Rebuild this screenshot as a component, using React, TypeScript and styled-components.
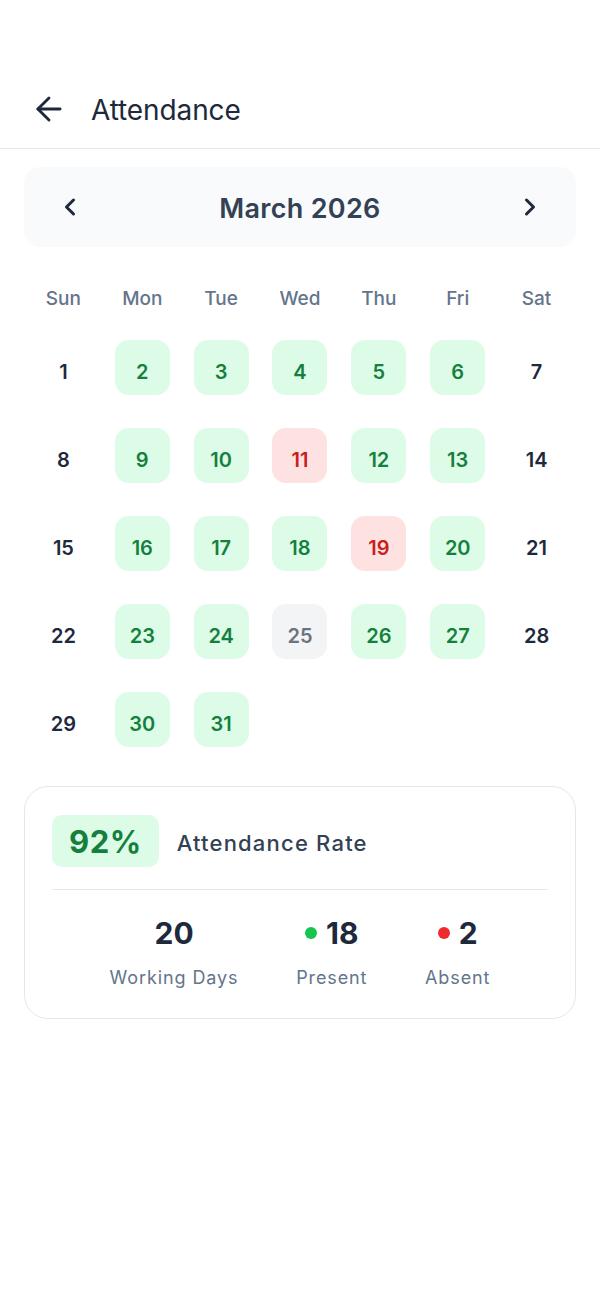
import { createGlobalStyle } from "styled-components";
import styled from "styled-components";
import { ArrowLeft, ChevronLeft, ChevronRight } from "lucide-react";

type DayStatus = "present" | "absent" | "holiday" | "none";

const WEEKDAYS = ["Sun", "Mon", "Tue", "Wed", "Thu", "Fri", "Sat"];

// March 2026 starts on a Sunday
const ABSENT = [11, 19];
const HOLIDAY = [25];

function statusOf(day: number): DayStatus {
  const dow = (day - 1) % 7;
  if (dow === 0 || dow === 6) return "none";
  if (ABSENT.includes(day)) return "absent";
  if (HOLIDAY.includes(day)) return "holiday";
  return "present";
}

const days = Array.from({ length: 31 }, (_, i) => i + 1);

export default function App() {
  return (
    <>
      <GlobalStyle />
      <Page>
        <Header>
          <BackButton aria-label="Back">
            <ArrowLeft size={38} strokeWidth={1.8} />
          </BackButton>
          <Title>Attendance</Title>
        </Header>

        <Content>
          <MonthNav>
            <NavButton aria-label="Previous month">
              <ChevronLeft size={28} strokeWidth={2.6} />
            </NavButton>
            <MonthLabel>March 2026</MonthLabel>
            <NavButton aria-label="Next month">
              <ChevronRight size={28} strokeWidth={2.6} />
            </NavButton>
          </MonthNav>

          <WeekdayRow>
            {WEEKDAYS.map((d) => (
              <Weekday key={d}>{d}</Weekday>
            ))}
          </WeekdayRow>

          <DayGrid>
            {days.map((d) => (
              <DayCell key={d} $status={statusOf(d)}>
                {d}
              </DayCell>
            ))}
          </DayGrid>

          <SummaryCard>
            <RateRow>
              <RateBadge>92%</RateBadge>
              <RateLabel>Attendance Rate</RateLabel>
            </RateRow>
            <Divider />
            <Stats>
              <Stat>
                <StatValue>20</StatValue>
                <StatLabel>Working Days</StatLabel>
              </Stat>
              <Stat>
                <StatValue>
                  <Dot $color="#16c44f" />
                  18
                </StatValue>
                <StatLabel>Present</StatLabel>
              </Stat>
              <Stat>
                <StatValue>
                  <Dot $color="#ef2b2d" />
                  2
                </StatValue>
                <StatLabel>Absent</StatLabel>
              </Stat>
            </Stats>
          </SummaryCard>
        </Content>
      </Page>
    </>
  );
}

const GlobalStyle = createGlobalStyle`
  html, body {
    margin: 0;
    padding: 0;
    background: #ffffff;
  }
  body {
    font-family: Inter, "Noto Sans", "Liberation Sans", sans-serif;
    color: #1e293b;
    -webkit-font-smoothing: antialiased;
  }
  * {
    box-sizing: border-box;
  }
`;

const Page = styled.div`
  min-height: 1299px;
  background: #ffffff;
`;

const Header = styled.header`
  display: flex;
  align-items: center;
  gap: 23px;
  height: 149px;
  padding: 83px 24px 11px 30px;
  border-bottom: 1.5px solid #e5e7eb;
`;

const BackButton = styled.button`
  display: flex;
  align-items: center;
  justify-content: center;
  padding: 0;
  margin-top: -3px;
  border: none;
  background: none;
  color: #1e293b;
  cursor: pointer;
`;

const Title = styled.h1`
  margin: 0;
  font-size: 28px;
  font-weight: 400;
  color: #1e293b;
  letter-spacing: -0.1px;
`;

const Content = styled.main`
  padding: 18px 24px 0;
`;

const MonthNav = styled.div`
  display: flex;
  align-items: center;
  justify-content: space-between;
  height: 80px;
  padding: 0 32px;
  background: #f8fafc;
  border-radius: 16px;
`;

const NavButton = styled.button`
  display: flex;
  align-items: center;
  justify-content: center;
  padding: 0;
  border: none;
  background: none;
  color: #1e293b;
  cursor: pointer;
`;

const MonthLabel = styled.h2`
  margin: 2px 0 0;
  font-size: 27px;
  font-weight: 600;
  color: #334155;
  letter-spacing: 0.3px;
`;

const WeekdayRow = styled.div`
  display: grid;
  grid-template-columns: repeat(7, 1fr);
  margin-top: 40px;
`;

const Weekday = styled.div`
  padding-top: 1px;
  text-align: center;
  font-size: 19px;
  line-height: 22px;
  font-weight: 500;
  color: #64748b;
`;

const DayGrid = styled.div`
  display: grid;
  grid-template-columns: repeat(7, 1fr);
  justify-items: center;
  row-gap: 33px;
  margin-top: 30px;
`;

const dayColors: Record<DayStatus, { bg: string; fg: string }> = {
  present: { bg: "#dcfce7", fg: "#15803d" },
  absent: { bg: "#fee2e2", fg: "#c81e1e" },
  holiday: { bg: "#f3f4f6", fg: "#6b7280" },
  none: { bg: "transparent", fg: "#1e293b" },
};

const DayCell = styled.div<{ $status: DayStatus }>`
  display: flex;
  align-items: center;
  justify-content: center;
  width: 55px;
  height: 55px;
  padding-top: 8px;
  border-radius: 14px;
  font-size: 20px;
  font-weight: 600;
  background: ${(p) => dayColors[p.$status].bg};
  color: ${(p) => dayColors[p.$status].fg};
`;

const SummaryCard = styled.section`
  margin-top: 39px;
  padding: 28px 27px 29px;
  border: 1.5px solid #e5e7eb;
  border-radius: 24px;
`;

const RateRow = styled.div`
  display: flex;
  align-items: center;
  gap: 18px;
`;

const RateBadge = styled.div`
  display: flex;
  align-items: center;
  justify-content: center;
  height: 52px;
  padding: 0 17px;
  background: #dcfce7;
  border-radius: 10px;
  font-size: 31px;
  font-weight: 700;
  color: #15803d;
  letter-spacing: 0.5px;
`;

const RateLabel = styled.div`
  padding-top: 4px;
  font-size: 22px;
  font-weight: 500;
  color: #334155;
  letter-spacing: 1.2px;
`;

const Divider = styled.hr`
  margin: 22px 0 24px;
  border: none;
  border-top: 1.5px solid #e5e7eb;
`;

const Stats = styled.div`
  display: flex;
  justify-content: space-evenly;
`;

const Stat = styled.div`
  display: flex;
  flex-direction: column;
  align-items: center;
  gap: 16px;
`;

const StatValue = styled.div`
  display: flex;
  align-items: center;
  gap: 9px;
  padding-top: 1px;
  font-size: 30px;
  line-height: 36px;
  font-weight: 700;
  color: #1e293b;
`;

const Dot = styled.span<{ $color: string }>`
  width: 12px;
  height: 12px;
  border-radius: 50%;
  background: ${(p) => p.$color};
`;

const StatLabel = styled.div`
  font-size: 18px;
  line-height: 22px;
  font-weight: 400;
  color: #64748b;
  letter-spacing: 0.9px;
`;
